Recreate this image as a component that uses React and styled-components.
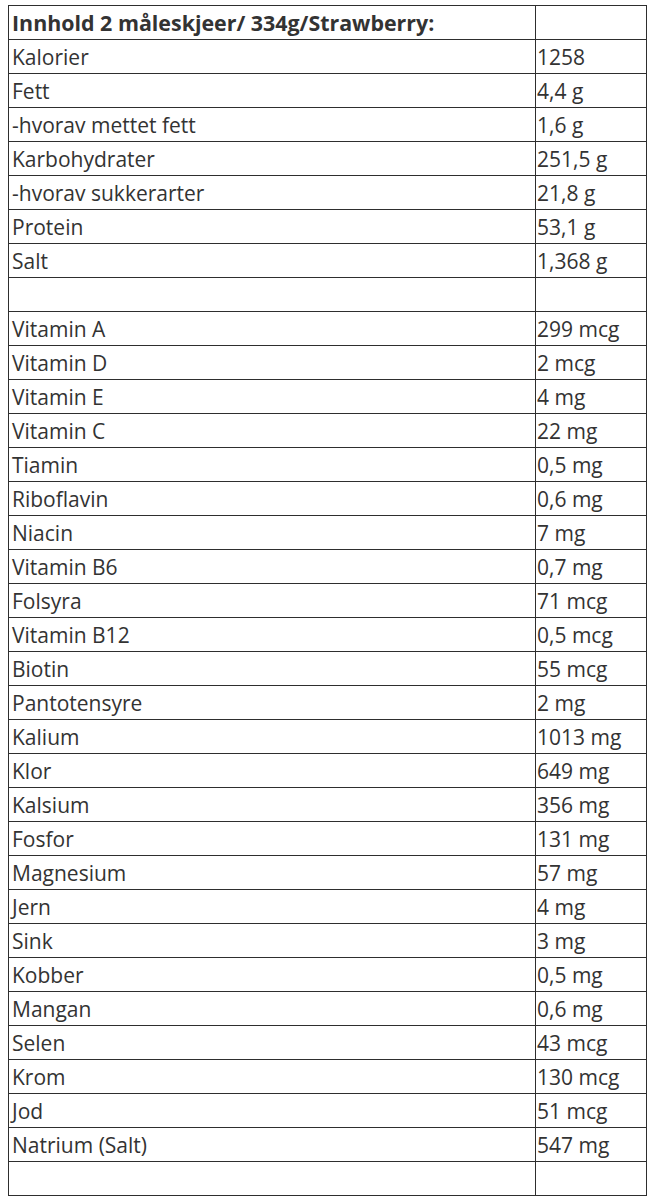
import styled, { createGlobalStyle } from "styled-components";

const GlobalStyle = createGlobalStyle`
  body {
    margin: 0;
    background: #ffffff;
    font-family: "Open Sans", "Noto Sans", sans-serif;
    color: #333333;
  }
`;

const Page = styled.div`
  padding: 5px 0 0 8px;
`;

const Table = styled.table`
  border-collapse: collapse;
  width: 638px;
  table-layout: fixed;
`;

const Cell = styled.td`
  border: 1px solid #2e2e2e;
  height: 33px;
  padding: 0 0 0 ${(props) => (props.$value ? "1px" : "3px")};
  font-size: ${(props) => (props.$bold ? "21.4px" : "21px")};
  line-height: 26px;
  font-weight: ${(props) => (props.$bold ? 700 : 400)};
  vertical-align: middle;
  white-space: nowrap;
  overflow: hidden;
`;

const rows = [
  ["Kalorier", "1258"],
  ["Fett", "4,4 g"],
  ["-hvorav mettet fett", "1,6 g"],
  ["Karbohydrater", "251,5 g"],
  ["-hvorav sukkerarter", "21,8 g"],
  ["Protein", "53,1 g"],
  ["Salt", "1,368 g"],
  ["", ""],
  ["Vitamin A", "299 mcg"],
  ["Vitamin D", "2 mcg"],
  ["Vitamin E", "4 mg"],
  ["Vitamin C", "22 mg"],
  ["Tiamin", "0,5 mg"],
  ["Riboflavin", "0,6 mg"],
  ["Niacin", "7 mg"],
  ["Vitamin B6", "0,7 mg"],
  ["Folsyra", "71 mcg"],
  ["Vitamin B12", "0,5 mcg"],
  ["Biotin", "55 mcg"],
  ["Pantotensyre", "2 mg"],
  ["Kalium", "1013 mg"],
  ["Klor", "649 mg"],
  ["Kalsium", "356 mg"],
  ["Fosfor", "131 mg"],
  ["Magnesium", "57 mg"],
  ["Jern", "4 mg"],
  ["Sink", "3 mg"],
  ["Kobber", "0,5 mg"],
  ["Mangan", "0,6 mg"],
  ["Selen", "43 mcg"],
  ["Krom", "130 mcg"],
  ["Jod", "51 mcg"],
  ["Natrium (Salt)", "547 mg"],
  ["", ""],
];

export default function App() {
  return (
    <Page>
      <GlobalStyle />
      <Table>
        <colgroup>
          <col style={{ width: "527px" }} />
          <col style={{ width: "111px" }} />
        </colgroup>
        <tbody>
          <tr>
            <Cell $bold>Innhold 2 måleskjeer/ 334g/Strawberry:</Cell>
            <Cell $value />
          </tr>
          {rows.map(([name, value], i) => (
            <tr key={i}>
              <Cell>{name}</Cell>
              <Cell $value>{value}</Cell>
            </tr>
          ))}
        </tbody>
      </Table>
    </Page>
  );
}
